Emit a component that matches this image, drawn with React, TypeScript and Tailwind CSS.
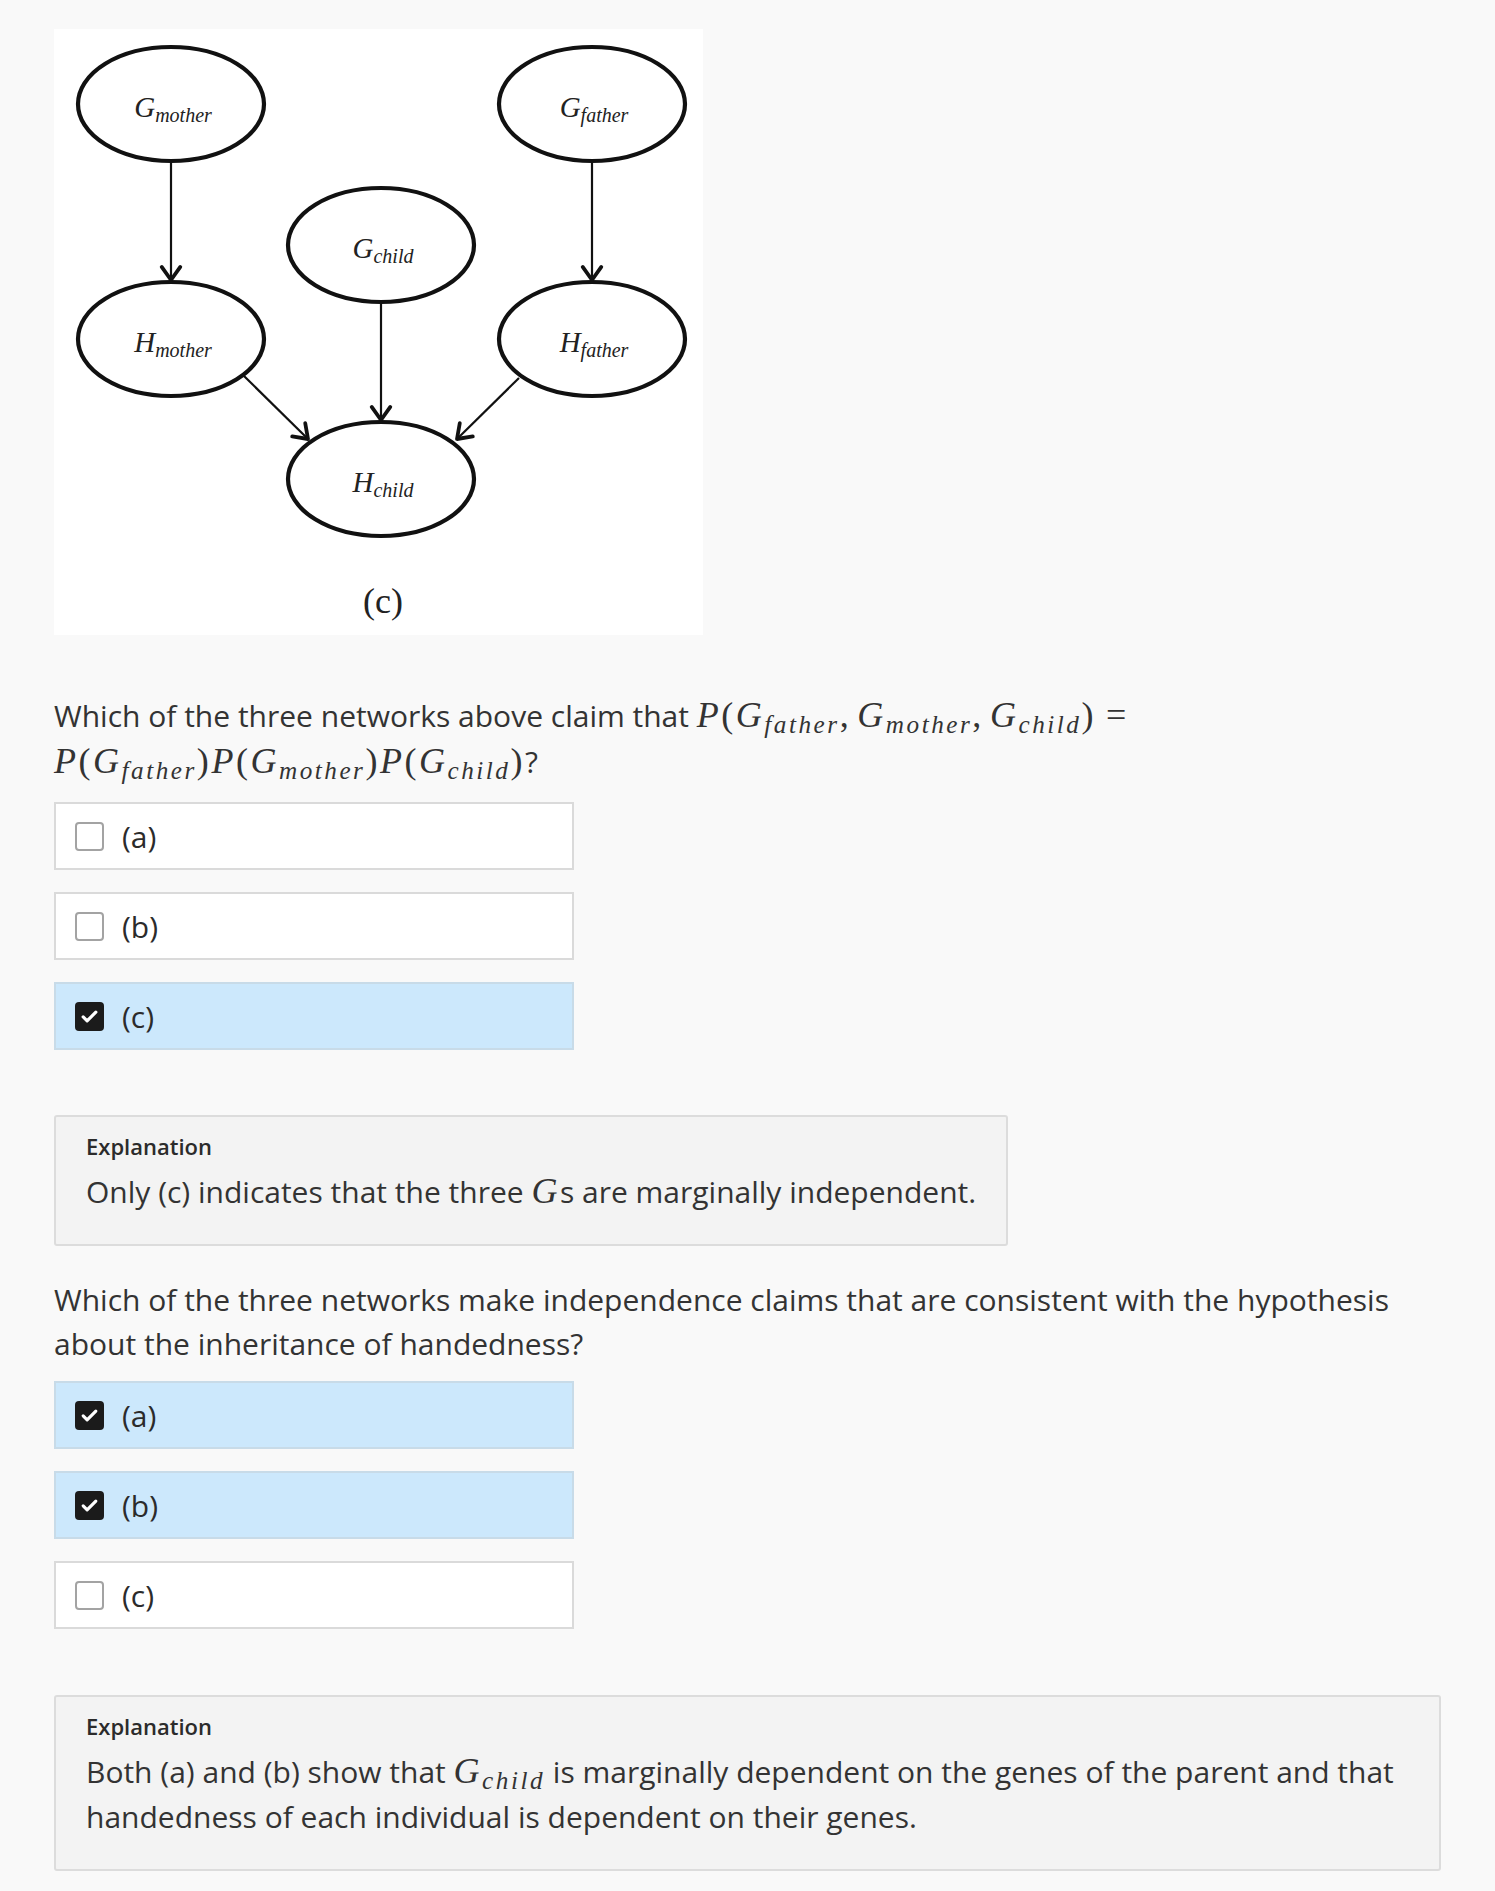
import React from 'react'

type Opt = { label: string; checked: boolean }

const Q1_OPTIONS: Opt[] = [
  { label: '(a)', checked: false },
  { label: '(b)', checked: false },
  { label: '(c)', checked: true },
]

const Q2_OPTIONS: Opt[] = [
  { label: '(a)', checked: true },
  { label: '(b)', checked: true },
  { label: '(c)', checked: false },
]

// math helpers, roughly KaTeX-looking
function G({ sub, letter = 'G' }: { sub: string; letter?: string }) {
  return (
    <>
      <i>{letter}</i>
      <sub className="text-[0.7em] italic">{sub}</sub>
    </>
  )
}

function TeX({ children }: { children: React.ReactNode }) {
  return (
    <span className="font-['Liberation_Serif',serif] text-[36px] leading-none tracking-[0.07em] not-italic">
      {children}
    </span>
  )
}

const Comma = () => <span className="mr-[0.17em]">,</span>
const Eq = () => <span className="mx-[0.28em]">=</span>

function Checkbox({ checked }: { checked: boolean }) {
  if (checked) {
    return (
      <span className="flex h-[29px] w-[29px] shrink-0 items-center justify-center rounded-[4px] bg-[#1b1b1b]">
        <svg width="19" height="19" viewBox="0 0 24 24" fill="none">
          <path d="M4 12.5l5 5L20 6.5" stroke="white" strokeWidth="4" strokeLinecap="round" strokeLinejoin="round" />
        </svg>
      </span>
    )
  }
  return <span className="h-[29px] w-[29px] shrink-0 rounded-[4px] border-2 border-[#a3a3a3] bg-white" />
}

function Options({ options }: { options: Opt[] }) {
  return (
    <div className="flex flex-col gap-[22px]">
      {options.map((o) => (
        <div
          key={o.label}
          className={`flex h-[68px] w-[520px] items-center gap-[18px] border-2 px-[19px] ${
            o.checked ? 'border-[#c8dbe8] bg-[#cce8fc]' : 'border-[#dadada] bg-white'
          }`}
        >
          <Checkbox checked={o.checked} />
          <span className="text-[#2b2b2b]">{o.label}</span>
        </div>
      ))}
    </div>
  )
}

function Explanation({ children }: { children: React.ReactNode }) {
  return (
    <div className="inline-block max-w-full rounded-[3px] border-2 border-[#dcdcdc] bg-[#f3f3f3] px-[30px] pb-[30px] pt-[14px]">
      <div className="text-[22px] font-semibold leading-[30px] text-[#2b2b2b]">Explanation</div>
      <div className="mt-[8px] leading-[45px]">{children}</div>
    </div>
  )
}

// ---- network diagram (c) ----
const NODES = [
  { id: 'gm', x: 117, y: 75, base: 'G', sub: 'mother' },
  { id: 'gf', x: 538, y: 75, base: 'G', sub: 'father' },
  { id: 'gc', x: 327, y: 216, base: 'G', sub: 'child' },
  { id: 'hm', x: 117, y: 310, base: 'H', sub: 'mother' },
  { id: 'hf', x: 538, y: 310, base: 'H', sub: 'father' },
  { id: 'hc', x: 327, y: 450, base: 'H', sub: 'child' },
]

const EDGES = [
  [117, 134, 117, 251],
  [538, 134, 538, 251],
  [327, 275, 327, 391],
  [190, 347, 254, 410],
  [465, 349, 403, 410],
]

function Arrow({ e }: { e: number[] }) {
  const [x1, y1, x2, y2] = e
  const a = Math.atan2(y2 - y1, x2 - x1)
  const len = 16
  const spread = 0.62
  const p1 = [x2 - len * Math.cos(a - spread), y2 - len * Math.sin(a - spread)]
  const p2 = [x2 - len * Math.cos(a + spread), y2 - len * Math.sin(a + spread)]
  return (
    <g>
      <line x1={x1} y1={y1} x2={x2} y2={y2} stroke="#111" strokeWidth="2.2" />
      <path
        d={`M${p1[0]} ${p1[1]} L${x2} ${y2} L${p2[0]} ${p2[1]}`}
        fill="none"
        stroke="#111"
        strokeWidth="3.8"
        strokeLinecap="round"
        strokeLinejoin="round"
      />
    </g>
  )
}

function Diagram() {
  return (
    <svg width="649" height="606" viewBox="0 0 649 606" className="block bg-white">
      {EDGES.map((e, i) => (
        <Arrow key={i} e={e} />
      ))}
      {NODES.map((n) => (
        <g key={n.id}>
          <ellipse cx={n.x} cy={n.y} rx={93} ry={57} fill="white" stroke="#111" strokeWidth="4.2" />
          <text
            x={n.x + 2}
            y={n.y + 13}
            textAnchor="middle"
            fontFamily="'Liberation Serif', serif"
            fontStyle="italic"
            fontSize="29"
            fill="#222"
          >
            <tspan>{n.base}</tspan>
            <tspan fontSize="20" dy="5">
              {n.sub}
            </tspan>
          </text>
        </g>
      ))}
      <text x="329" y="584" textAnchor="middle" fontFamily="'Liberation Serif', serif" fontSize="36" fill="#222">
        (c)
      </text>
    </svg>
  )
}

export default function App() {
  return (
    <div className="min-h-screen bg-[#f9f9f9] px-[54px] pb-[20px] pt-[29px] font-['Open_Sans',sans-serif] text-[30px] text-[#333]">
      <Diagram />

      <p className="mt-[58px] leading-[46px]">
        Which of the three networks above claim that{' '}
        <TeX>
          <i>P</i>(<G sub="father" />
          <Comma />
          <G sub="mother" />
          <Comma />
          <G sub="child" />)<Eq />
        </TeX>{' '}
        <TeX>
          <i>P</i>(<G sub="father" />)<i>P</i>(<G sub="mother" />)<i>P</i>(<G sub="child" />)
        </TeX>
        ?
      </p>

      <div className="mt-[17px]">
        <Options options={Q1_OPTIONS} />
      </div>

      <div className="mt-[65px]">
        <Explanation>
          Only (c) indicates that the three{' '}
          <TeX>
            <i>G</i>
          </TeX>
          s are marginally independent.
        </Explanation>
      </div>

      <p className="mt-[32px] leading-[44px]">
        Which of the three networks make independence claims that are consistent with the hypothesis about the
        inheritance of handedness?
      </p>

      <div className="mt-[15px]">
        <Options options={Q2_OPTIONS} />
      </div>

      <div className="mt-[66px]">
        <Explanation>
          Both (a) and (b) show that{' '}
          <TeX>
            <G sub="child" />
          </TeX>{' '}
          is marginally dependent on the genes of the parent and that handedness of each individual is dependent on
          their genes.
        </Explanation>
      </div>
    </div>
  )
}
